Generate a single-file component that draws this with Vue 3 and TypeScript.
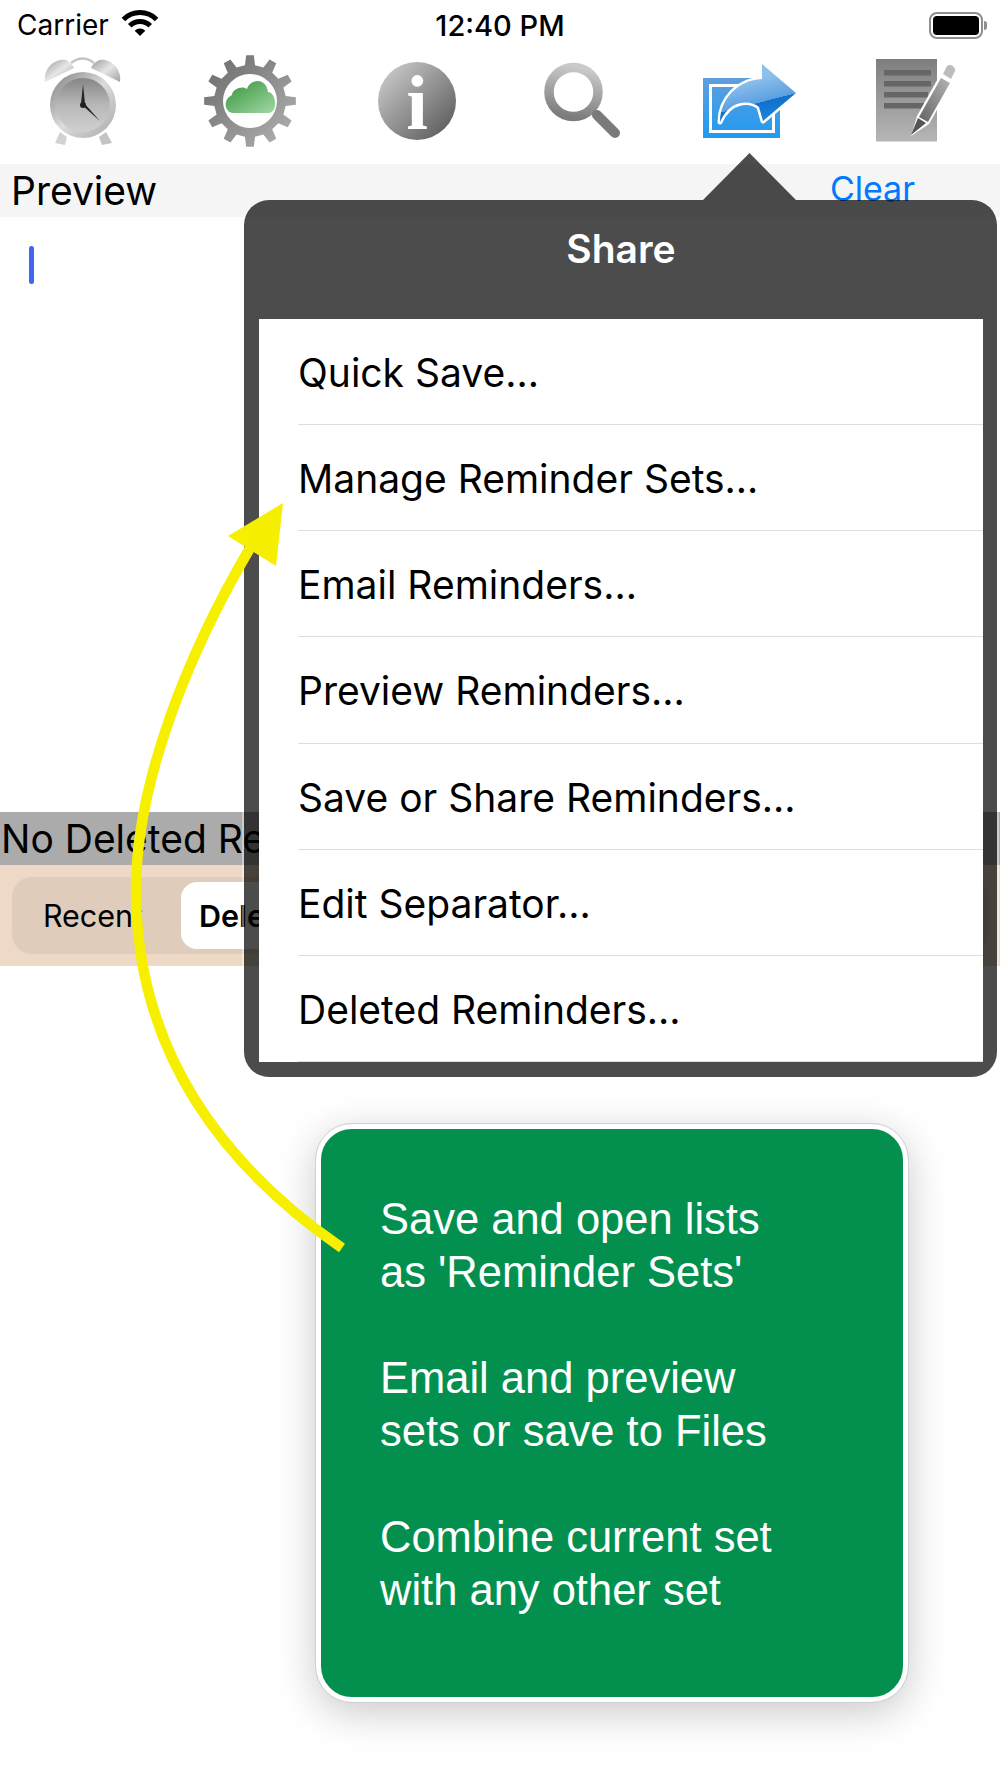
<template>
	<div class="page">
		<!-- status bar -->
		<div class="status">
			<div class="status-left">
				<span>Carrier</span>
				<svg class="wifi" width="38" height="28" viewBox="0 0 38 28">
					<path d="M19 27 L13.7 21.7 A7.5 7.5 0 0 1 24.3 21.7 Z" fill="#000" />
					<path d="M8.75 16.75 A14.5 14.5 0 0 1 29.25 16.75" fill="none" stroke="#000" stroke-width="5" />
					<path d="M2.4 10.4 A23.5 23.5 0 0 1 35.6 10.4" fill="none" stroke="#000" stroke-width="5" />
				</svg>
			</div>
			<span class="time">12:40 PM</span>
			<div class="battery">
				<div class="battery-body"><div class="battery-fill"></div></div>
				<div class="battery-nub"></div>
			</div>
		</div>

		<!-- toolbar -->
		<div class="toolbar">
			<svg width="78" height="90" viewBox="45 56 78 90">
				<defs>
					<linearGradient id="bell" x1="0" y1="0" x2="1" y2="1">
						<stop offset="0" stop-color="#9c9c9c" />
						<stop offset="0.5" stop-color="#e6e6e6" />
						<stop offset="1" stop-color="#a0a0a0" />
					</linearGradient>
					<linearGradient id="rim" x1="0" y1="0" x2="1" y2="1">
						<stop offset="0" stop-color="#7e7e7e" />
						<stop offset="0.5" stop-color="#dcdcdc" />
						<stop offset="1" stop-color="#a8a8a8" />
					</linearGradient>
					<linearGradient id="face" x1="0" y1="0" x2="0" y2="1">
						<stop offset="0" stop-color="#868686" />
						<stop offset="0.5" stop-color="#b8b8b8" />
						<stop offset="1" stop-color="#d0d0d0" />
					</linearGradient>
				</defs>
				<path d="M72 63 Q84 54 95 63" fill="none" stroke="#c4c4c4" stroke-width="2.5" />
				<path d="M46 82 C44 68 56 58 67 60 C71 62 74 65 75 68 Z" fill="url(#bell)" />
				<path d="M121 82 C123 68 111 58 100 60 C96 62 93 65 92 68 Z" fill="url(#bell)" />
				<path d="M56 143 L61 132 L68 137 L66 145 Z" fill="#d2d2d2" />
				<path d="M113 143 L107 132 L100 137 L103 145 Z" fill="#c4c4c4" />
				<circle cx="84" cy="105" r="33" fill="url(#rim)" />
				<circle cx="84" cy="105" r="27" fill="url(#face)" />
				<path d="M84 84 L86 104 L82 104 Z" fill="#222" />
				<path d="M83 105 L85 103 L101 121 Z" fill="#222" />
				<circle cx="84" cy="105" r="3" fill="#222" />
			</svg>
			<svg width="92" height="92" viewBox="204 55 92 92">
				<defs>
					<linearGradient id="gear" x1="0" y1="0" x2="1" y2="1">
						<stop offset="0" stop-color="#686868" />
						<stop offset="1" stop-color="#b4b4b4" />
					</linearGradient>
					<linearGradient id="cloud" x1="0" y1="0" x2="1" y2="1">
						<stop offset="0" stop-color="#36933c" />
						<stop offset="1" stop-color="#a2d8a4" />
					</linearGradient>
				</defs>
				<path :d="gearPath" fill="url(#gear)" fill-rule="evenodd" />
				<path d="M233 113 C225 113 222 100 232 95 C232 89 243 85 247 89 C250 79 266 77 268 92 C276 92 279 113 268 113 Z" fill="url(#cloud)" />
			</svg>
			<svg width="78" height="98" viewBox="378 52 78 98">
				<defs>
					<linearGradient id="info" gradientUnits="userSpaceOnUse" x1="389" y1="73" x2="445" y2="129">
						<stop offset="0" stop-color="#c2c2c2" />
						<stop offset="1" stop-color="#646464" />
					</linearGradient>
				</defs>
				<circle cx="417" cy="101" r="39" fill="url(#info)" />
				<text x="417" y="129" class="info-i" text-anchor="middle">i</text>
			</svg>
			<svg width="78" height="78" viewBox="545 62 78 78">
				<defs>
					<linearGradient id="lens" x1="0.6" y1="0" x2="0.4" y2="1">
						<stop offset="0" stop-color="#cacaca" />
						<stop offset="1" stop-color="#7c7c7c" />
					</linearGradient>
				</defs>
				<circle cx="574.5" cy="92" r="24.5" fill="none" stroke="url(#lens)" stroke-width="9.5" />
				<path d="M598 115 L616 133" stroke="#7a7a7a" stroke-width="10" stroke-linecap="round" />
			</svg>
			<svg width="94" height="76" viewBox="703 64 94 76">
				<defs>
					<linearGradient id="box" x1="0" y1="0" x2="0" y2="1">
						<stop offset="0" stop-color="#5f9fdc" />
						<stop offset="1" stop-color="#1f9af2" />
					</linearGradient>
					<linearGradient id="arrowTop" gradientUnits="userSpaceOnUse" x1="754" y1="80" x2="764" y2="119">
						<stop offset="0" stop-color="#8fc0ec" />
						<stop offset="0.6" stop-color="#5a9fe0" />
						<stop offset="0.6" stop-color="#1070cc" />
						<stop offset="1" stop-color="#1a80dc" />
					</linearGradient>
				</defs>
				<rect x="703" y="79" width="77" height="60" fill="url(#box)" />
				<rect x="710.5" y="86.5" width="63" height="46" fill="none" stroke="#fff" stroke-width="3" />
				<path d="M720 123 C720 100 738 81 762 80 L762 65 L796 94 L763 122 L759 108 C750 101 730 100 720 123 Z" fill="#fff" stroke="#fff" stroke-width="5" stroke-linejoin="round" />
				<path d="M720 123 C720 100 738 81 762 80 L762 65 L796 94 L763 122 L759 108 C750 101 730 100 720 123 Z" fill="url(#arrowTop)" />
			</svg>
			<svg width="82" height="84" viewBox="876 60 82 84">
				<defs>
					<linearGradient id="sheet" x1="0" y1="0" x2="0" y2="1">
						<stop offset="0" stop-color="#7e7e7e" />
						<stop offset="1" stop-color="#b6b6b6" />
					</linearGradient>
					<linearGradient id="pencil" x1="1" y1="0" x2="0" y2="1">
						<stop offset="0" stop-color="#b4b4b4" />
						<stop offset="1" stop-color="#646464" />
					</linearGradient>
				</defs>
				<rect x="876" y="60" width="61" height="82.5" fill="url(#sheet)" />
				<rect x="884" y="71" width="47" height="5.5" fill="#666" />
				<rect x="884" y="82" width="47" height="5.5" fill="#666" />
				<rect x="884" y="93" width="44" height="5.5" fill="#666" />
				<rect x="884" y="104" width="40" height="5.5" fill="#666" />
				<path d="M911 137 L917 117 L941 74 L954 81 L929 125 Z" fill="#fff" />
				<path d="M911 136 L918 119 L926 124 Z" fill="#555" />
				<path d="M919 118 L941 79 L950 84 L928 123 Z" fill="url(#pencil)" />
				<path d="M943 75 L947 67 C950 64 956 68 955 72 L951 80 Z" fill="#bcbcbc" />
			</svg>
		</div>

		<div class="preview-bar">
			<span class="preview-title">Preview</span>
			<span class="clear">Clear</span>
		</div>

		<div class="editor"><div class="cursor"></div></div>

		<div class="deleted-bar">No Deleted Reminders</div>
		<div class="band">
			<div class="segments">
				<div class="segment">Recent</div>
				<div class="segment selected">Deleted</div>
			</div>
		</div>

		<!-- share popover -->
		<div class="popover">
			<div class="popover-arrow"></div>
			<div class="popover-title">Share</div>
			<div class="menu">
				<div v-for="item in menuItems" :key="item" class="menu-row">
					<span class="menu-text">{{ item }}</span>
				</div>
			</div>
		</div>

		<!-- tip card -->
		<div class="tip">
			<p v-for="para in tips" :key="para[0]">
				{{ para[0] }}<br />{{ para[1] }}
			</p>
		</div>

		<svg class="callout" width="1000" height="1778" viewBox="0 0 1000 1778">
			<path d="M342 1248 C258 1190 136 1080 136 890 C136 780 190 650 250 548" fill="none" stroke="#f7ef00" stroke-width="10.5" />
			<path d="M283 503 L228 536 L276 566 Z" fill="#f7ef00" />
		</svg>
	</div>
</template>

<script setup lang="ts">
const menuItems = [
	'Quick Save...',
	'Manage Reminder Sets...',
	'Email Reminders...',
	'Preview Reminders...',
	'Save or Share Reminders...',
	'Edit Separator...',
	'Deleted Reminders...'
]

const tips = [
	['Save and open lists', "as 'Reminder Sets'"],
	['Email and preview', 'sets or save to Files'],
	['Combine current set', 'with any other set']
]

// 12 teeth around a ring, hole cut out with evenodd
function makeGear(cx: number, cy: number) {
	const teeth = 12
	const outer = 46
	const root = 36
	const hole = 27
	let d = ''
	for (let i = 0; i < teeth; i++) {
		const a = (i / teeth) * Math.PI * 2 - Math.PI / 2
		const step = (Math.PI * 2) / teeth
		const pts: [number, number][] = [
			[root, a - step * 0.27],
			[outer, a - step * 0.16],
			[outer, a + step * 0.16],
			[root, a + step * 0.27]
		]
		for (const [r, t] of pts) {
			const x = (cx + r * Math.cos(t)).toFixed(2)
			const y = (cy + r * Math.sin(t)).toFixed(2)
			d += (d ? 'L' : 'M') + x + ' ' + y + ' '
		}
	}
	d += 'Z '
	d += `M${cx - hole} ${cy} A${hole} ${hole} 0 1 0 ${cx + hole} ${cy} A${hole} ${hole} 0 1 0 ${cx - hole} ${cy} Z`
	return d
}

const gearPath = makeGear(250, 101)
</script>

<style>
body {
	background: #fff;
}
</style>

<style scoped>
.page {
	position: relative;
	width: 1000px;
	height: 1778px;
	overflow: hidden;
	background: #fff;
	font-family: Inter, 'Noto Sans', sans-serif;
	color: #000;
}

.status {
	position: relative;
	height: 50px;
	display: flex;
	align-items: center;
	justify-content: space-between;
	padding: 0 13px 0 17px;
	box-sizing: border-box;
	font-size: 28px;
}

.status-left {
	display: flex;
	align-items: center;
	gap: 12px;
}

.wifi {
	margin-top: -4px;
}

.time {
	position: absolute;
	left: 0;
	right: 0;
	text-align: center;
	font-size: 29px;
	font-weight: 500;
}

.battery {
	display: flex;
	align-items: center;
	gap: 1px;
}

.battery-body {
	width: 54px;
	height: 27px;
	box-sizing: border-box;
	border: 2px solid #8e8e8e;
	border-radius: 8px;
	padding: 2px;
}

.battery-fill {
	height: 100%;
	background: #000;
	border-radius: 4px;
}

.battery-nub {
	width: 3px;
	height: 9px;
	background: #8e8e8e;
	border-radius: 0 3px 3px 0;
}

.toolbar {
	height: 114px;
	display: grid;
	grid-template-columns: repeat(6, 1fr);
	justify-items: center;
	align-items: center;
	padding-bottom: 12px;
	box-sizing: border-box;
}

.info-i {
	font-family: 'Liberation Serif', serif;
	font-weight: 700;
	font-size: 78px;
	fill: #fff;
}

.preview-bar {
	height: 53px;
	display: flex;
	align-items: center;
	justify-content: space-between;
	background: #f5f5f5;
	padding: 0 85px 0 11px;
}

.preview-title {
	font-size: 39px;
}

.clear {
	font-size: 34px;
	margin-top: -4px;
	color: #007aff;
}

.editor {
	height: 595px;
	padding: 29px 0 0 29px;
	box-sizing: border-box;
}

.cursor {
	width: 5px;
	height: 38px;
	border-radius: 3px;
	background: #4066f0;
}

.deleted-bar {
	height: 53px;
	line-height: 53px;
	padding-left: 1px;
	background: #ababab;
	font-size: 39px;
	white-space: nowrap;
}

.band {
	height: 101px;
	background: #eed9c6;
	padding: 12px;
	box-sizing: border-box;
}

.segments {
	height: 77px;
	display: flex;
	align-items: center;
	gap: 12px;
	padding: 0 5px;
	background: #dfccba;
	border-radius: 20px;
	font-size: 30.5px;
}

.segment {
	width: 152px;
	text-align: center;
}

.segment.selected {
	width: 300px;
	height: 67px;
	line-height: 67px;
	text-align: left;
	padding-left: 18px;
	box-sizing: border-box;
	background: #fff;
	border-radius: 16px;
	font-weight: 600;
}

.popover {
	position: absolute;
	left: 244px;
	top: 200px;
	width: 753px;
	height: 877px;
	box-sizing: border-box;
	padding: 0 14px 15px 15px;
	display: flex;
	flex-direction: column;
	background: rgba(0, 0, 0, 0.7);
	border-radius: 25px;
	box-shadow: -2px 0 0 rgba(255, 255, 255, 0.4), 2px 0 0 rgba(255, 255, 255, 0.4);
}

.popover-arrow {
	position: absolute;
	left: 459px;
	top: -47px;
	width: 93px;
	height: 47px;
	background: rgba(0, 0, 0, 0.7);
	clip-path: polygon(50% 0, 100% 100%, 0 100%);
}

.popover-title {
	height: 119px;
	flex: none;
	line-height: 97px;
	text-align: center;
	color: #fff;
	font-size: 39px;
	font-weight: 600;
}

.menu {
	flex: 1;
	background: #fff;
	display: flex;
	flex-direction: column;
}

.menu-row {
	flex: 1;
	margin-left: 39px;
	display: flex;
	align-items: center;
	padding-top: 2px;
	border-bottom: 1.5px solid #dedede;
	font-size: 39px;
}

.tip {
	position: absolute;
	left: 316px;
	top: 1124px;
	width: 592px;
	height: 578px;
	box-sizing: border-box;
	padding: 64px 40px 0 59px;
	background: #03904f;
	border: 5px solid #fff;
	outline: 1px solid #d0d0d0;
	border-radius: 36px;
	box-shadow: 0 10px 40px rgba(0, 0, 0, 0.22);
	color: #fff;
	font-family: 'Liberation Sans', Arial, sans-serif;
	font-size: 43.5px;
	line-height: 53px;
}

.tip p {
	margin: 0 0 53px;
}

.callout {
	position: absolute;
	left: 0;
	top: 0;
	pointer-events: none;
}
</style>
